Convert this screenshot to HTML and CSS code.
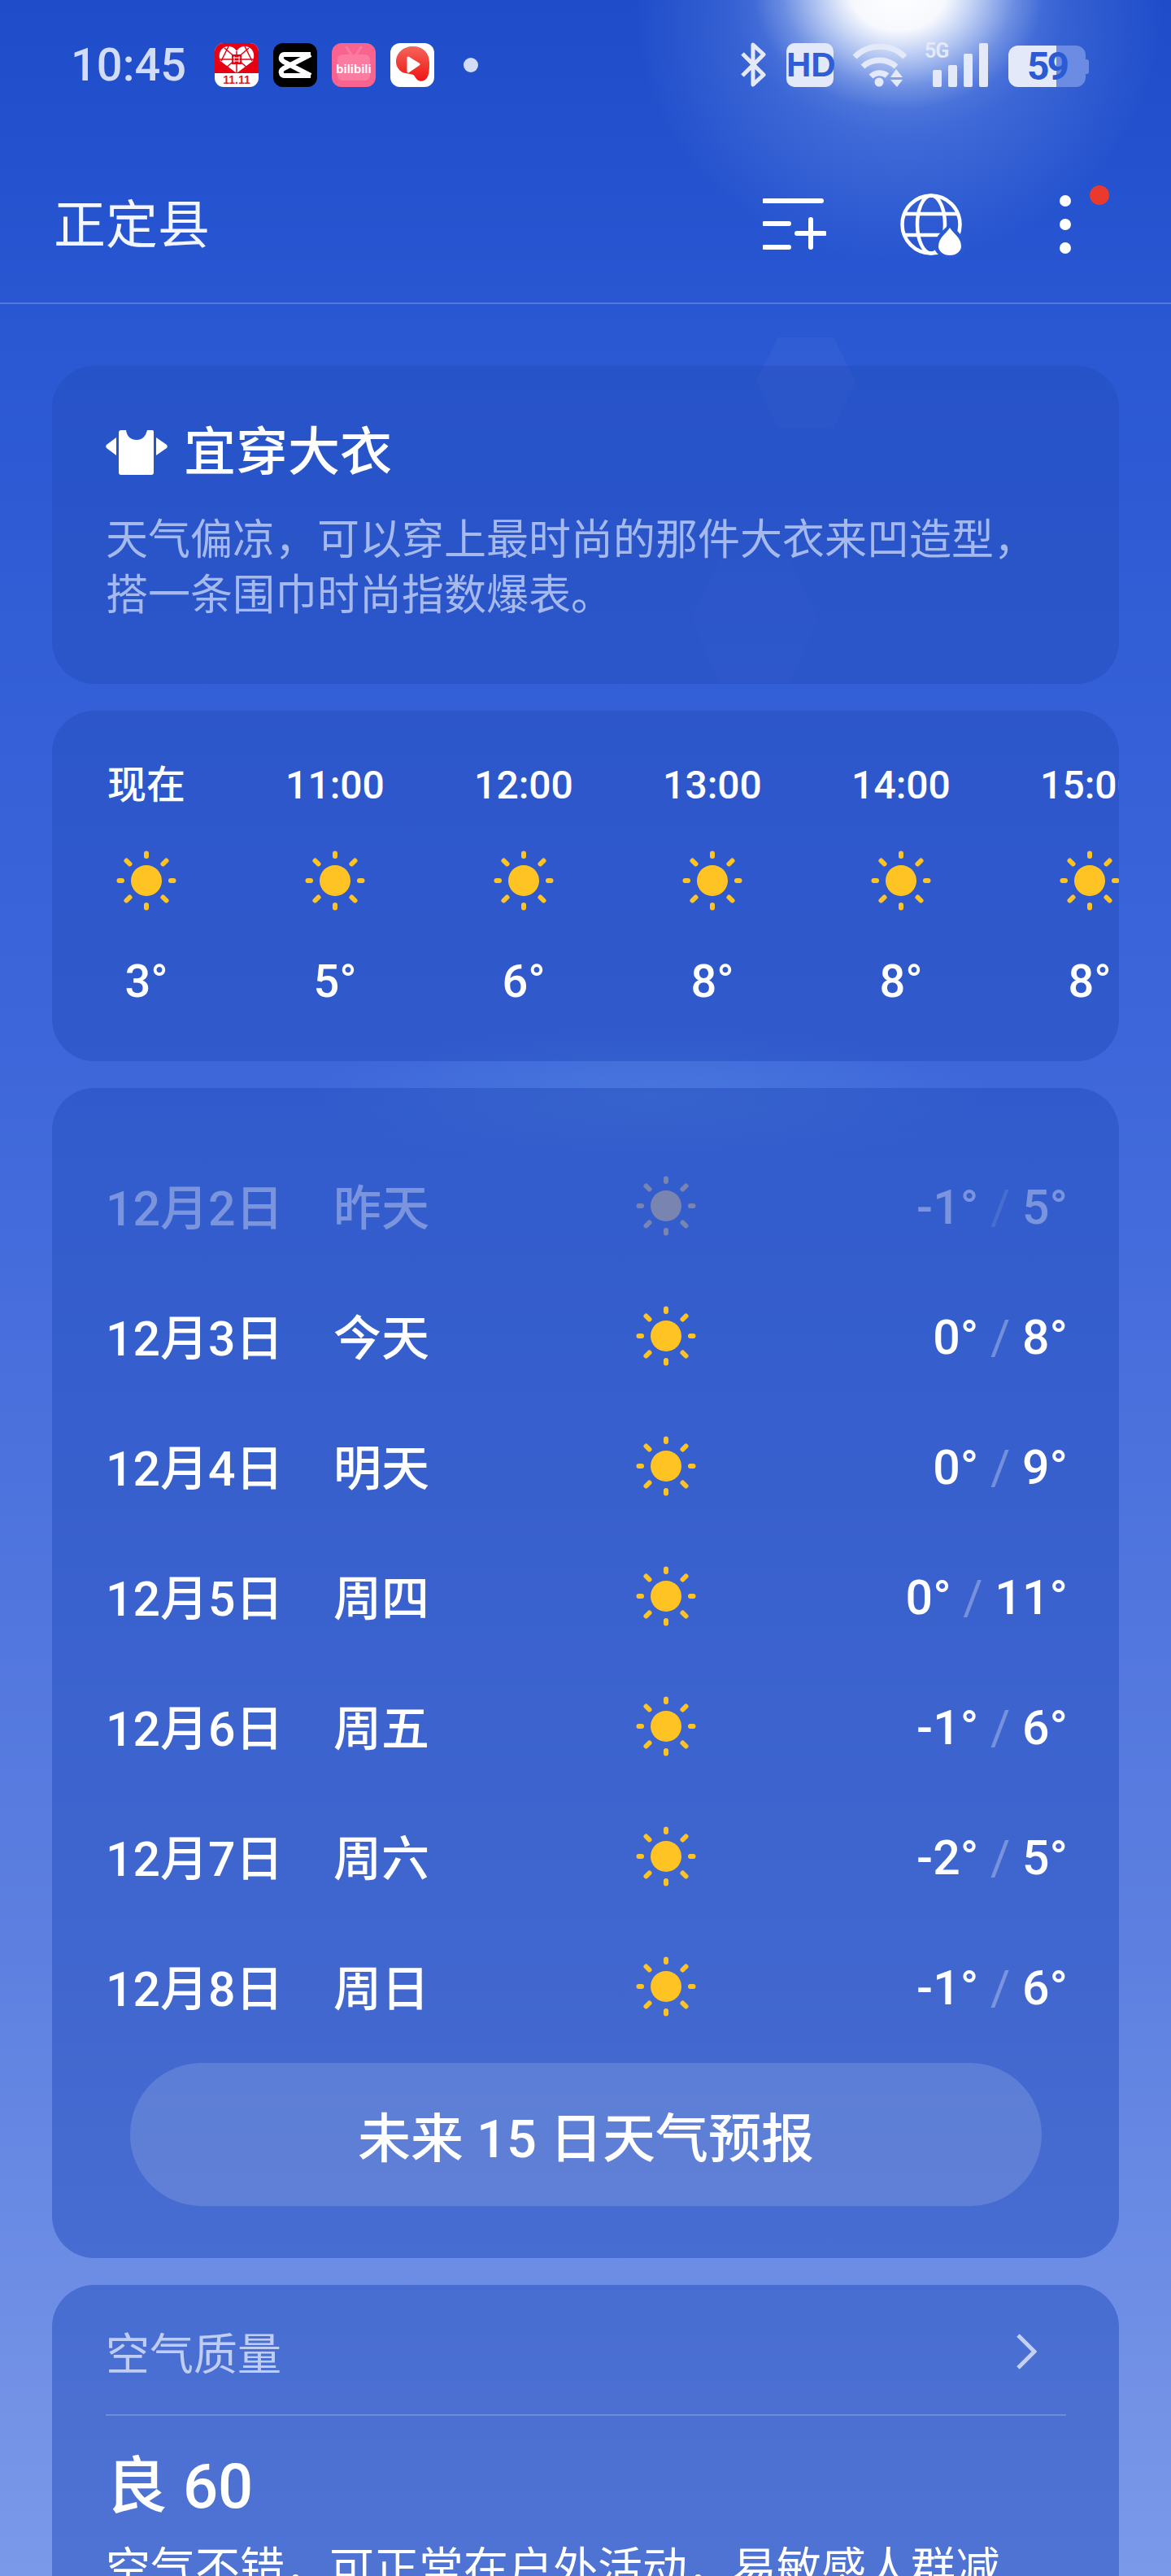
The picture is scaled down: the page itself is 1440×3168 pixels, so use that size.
FILE: index.html
```html
<!DOCTYPE html>
<html lang="zh-CN">
<head>
    <meta charset="UTF-8">
    <meta name="viewport" content="width=device-width, initial-scale=1.0">
    <title>正定县</title>
    <link rel="stylesheet" href="styles.css">
</head>
<body>
    <svg class="defs" width="0" height="0">
        <symbol id="sun" viewBox="0 0 76 76">
            <circle cx="38" cy="38" r="19"/>
            <g stroke-width="6" stroke-linecap="round">
                <path d="M38 4.500v3.500M38 68v3.500M4.500 38h3.500M68 38h3.500M13.500 13.500l4 4M58.500 58.500l4 4M13.500 62.500l4-4M58.500 17.500l4-4"/>
            </g>
        </symbol>
        <linearGradient id="redPlay" x1="0" y1="0" x2="0" y2="1">
            <stop offset="0" stop-color="#f4655a"/>
            <stop offset="1" stop-color="#ef1414"/>
        </linearGradient>
    </svg>

    <div class="flare-wide"></div>
    <div class="flare"></div>
    <div class="ghost ghost-one"></div>
    <div class="ghost ghost-two"></div>

    <div class="page">
        <!-- Status bar -->
        <div class="status-bar">
            <span class="clock">10:45</span>
            <div class="app-icons">
                <svg class="app-icon" viewBox="0 0 54 54">
                    <rect width="54" height="54" rx="11" fill="#fff"/>
                    <path d="M0 11a11 11 0 0 1 11-11h32a11 11 0 0 1 11 11v26H0z" fill="#e60012"/>
                    <path d="M27 37L7 22C3 12 9 4 17 4c4 0 8 2 10 6 2-4 6-6 10-6 8 0 14 8 10 18z" fill="#fff"/>
                    <path d="M27 10v27M6 20h42M12 6l30 26M42 6L12 32M17 4l-9 18M37 4l9 18" stroke="#e60012" stroke-width="1.5" fill="none"/>
                    <rect x="21" y="14" width="12" height="12" fill="#e60012"/>
                    <path d="M24 16v8M30 16v8M22.500 18h9M22.500 22h9" stroke="#fff" stroke-width="1"/>
                    <text x="27" y="50" class="pdd-text">11.11</text>
                </svg>
                <svg class="app-icon" viewBox="0 0 54 54">
                    <rect width="54" height="54" rx="12" fill="#000"/>
                    <path d="M46 14L13 31c-3 2-4 4-3 6 0 2 2 3 4 3h32M46 40L13 23c-3-2-4-4-3-6 0-2 2-3 4-3h32" fill="none" stroke="#fff" stroke-width="6"/>
                </svg>
                <svg class="app-icon" viewBox="0 0 54 54">
                    <rect width="54" height="54" rx="12" fill="#f8648f"/>
                    <rect x="7" y="14" width="40" height="32" rx="6" fill="#fb7ba1"/>
                    <path d="M18 5l6 9M36 5l-6 9" stroke="#fb7ba1" stroke-width="3" stroke-linecap="round"/>
                    <text x="27" y="37" class="bili-text">bilibili</text>
                </svg>
                <svg class="app-icon" viewBox="0 0 54 54">
                    <rect width="54" height="54" rx="12" fill="#fff"/>
                    <path d="M28 4c12 0 20 8 20 20 0 7 0 14-3 19-3 4-8 5-12 2-2-2-3-5-5-6-4-2-9-1-13-3-5-3-8-8-8-13C7 12 16 4 28 4z" fill="url(#redPlay)"/>
                    <path d="M22 18l13 8-13 9z" fill="#fff" stroke="#fff" stroke-width="3" stroke-linejoin="round"/>
                </svg>
                <span class="more-dot"></span>
            </div>
            <div class="sys-icons">
                <svg class="sys-bt" viewBox="0 0 33 55">
                    <path d="M3 14l26 26-13 12V3l13 12L3 41" fill="none" stroke="#e3e9f8" stroke-width="5" stroke-linejoin="round"/>
                </svg>
                <div class="sys-hd">HD</div>
                <svg class="sys-wifi" viewBox="0 0 69 56">
                    <path d="M3 19a44 44 0 0 1 62 0M13 31a30 30 0 0 1 41 0M23 43a15 15 0 0 1 20-1" fill="none" stroke="#e3e9f8" stroke-width="7"/>
                    <circle cx="33" cy="50" r="5.500" fill="#e3e9f8"/>
                    <path d="M54 34l8 10H47zM47 47h15l-7 9z" fill="#e3e9f8"/>
                </svg>
                <div class="sys-signal">
                    <span class="five-g">5G</span>
                    <span class="bar bar-1"></span>
                    <span class="bar bar-2"></span>
                    <span class="bar bar-3"></span>
                    <span class="bar bar-4"></span>
                </div>
                <div class="battery">
                    <div class="battery-body"><span class="battery-num">59</span></div>
                    <div class="battery-nub"></div>
                </div>
            </div>
        </div>

        <!-- Header -->
        <header class="top-bar">
            <h1 class="city">正定县</h1>
            <div class="top-actions">
                <svg class="action-list" viewBox="0 0 78 64">
                    <path d="M2 3h70M2 31h30M2 60h30M42 43h34M59 26v34" fill="none" stroke="#fff" stroke-width="6" stroke-linecap="round"/>
                </svg>
                <svg class="action-globe" viewBox="0 0 76 76">
                    <g fill="none" stroke="#fff" stroke-width="4.500">
                        <circle cx="38" cy="38" r="35.500"/>
                        <ellipse cx="38" cy="38" rx="17" ry="35.500"/>
                        <path d="M5 25h66M5 51h66"/>
                    </g>
                    <path d="M61 36c5 8 19 15 19 29a19 15 0 0 1-38 0c0-14 14-21 19-29z" fill="#2858d2"/>
                    <path d="M61 42c4 7 14 12 14 23a14 11 0 0 1-28 0c0-11 10-16 14-23z" fill="#fff"/>
                </svg>
                <div class="action-more">
                    <span></span><span></span><span></span>
                    <i class="red-dot"></i>
                </div>
            </div>
        </header>

        <main class="cards">
            <!-- Clothing tip -->
            <section class="card tip-card">
                <div class="tip-title">
                    <svg class="shirt" viewBox="0 0 76 56">
                        <path d="M16 3c0-2 1-3 3-3h6c1 8 6 12 13 12s11-4 13-12h6c2 0 2 1 2 3v49c0 2-1 3-3 3H19c-2 0-3-1-3-3z" fill="#fff"/>
                        <path d="M13 9L1 18c-1 1-1 3 0 4l12 9zM62 9l13 9c1 1 1 3 0 4l-13 9z" fill="#fff"/>
                    </svg>
                    <span>宜穿大衣</span>
                </div>
                <p class="tip-text">天气偏凉，可以穿上最时尚的那件大衣来凹造型，<br>搭一条围巾时尚指数爆表。</p>
            </section>

            <!-- Hourly forecast -->
            <section class="card hourly-card">
                <div class="hour"><span class="hour-label">现在</span><svg class="sun"><use href="#sun"/></svg><span class="hour-temp">3°</span></div>
                <div class="hour"><span class="hour-label">11:00</span><svg class="sun"><use href="#sun"/></svg><span class="hour-temp">5°</span></div>
                <div class="hour"><span class="hour-label">12:00</span><svg class="sun"><use href="#sun"/></svg><span class="hour-temp">6°</span></div>
                <div class="hour"><span class="hour-label">13:00</span><svg class="sun"><use href="#sun"/></svg><span class="hour-temp">8°</span></div>
                <div class="hour"><span class="hour-label">14:00</span><svg class="sun"><use href="#sun"/></svg><span class="hour-temp">8°</span></div>
                <div class="hour"><span class="hour-label">15:00</span><svg class="sun"><use href="#sun"/></svg><span class="hour-temp">8°</span></div>
            </section>

            <!-- Daily forecast -->
            <section class="card daily-card">
                <div class="day past"><span>12月2日</span><span>昨天</span><svg class="sun"><use href="#sun"/></svg><span class="range">-1° <em>/</em> 5°</span></div>
                <div class="day"><span>12月3日</span><span>今天</span><svg class="sun"><use href="#sun"/></svg><span class="range">0° <em>/</em> 8°</span></div>
                <div class="day"><span>12月4日</span><span>明天</span><svg class="sun"><use href="#sun"/></svg><span class="range">0° <em>/</em> 9°</span></div>
                <div class="day"><span>12月5日</span><span>周四</span><svg class="sun"><use href="#sun"/></svg><span class="range">0° <em>/</em> 11°</span></div>
                <div class="day"><span>12月6日</span><span>周五</span><svg class="sun"><use href="#sun"/></svg><span class="range">-1° <em>/</em> 6°</span></div>
                <div class="day"><span>12月7日</span><span>周六</span><svg class="sun"><use href="#sun"/></svg><span class="range">-2° <em>/</em> 5°</span></div>
                <div class="day"><span>12月8日</span><span>周日</span><svg class="sun"><use href="#sun"/></svg><span class="range">-1° <em>/</em> 6°</span></div>
                <button class="more-btn" type="button">未来 15 日天气预报</button>
            </section>

            <!-- Air quality -->
            <section class="card air-card">
                <div class="air-head">
                    <span>空气质量</span>
                    <svg class="chevron" viewBox="0 0 26 44">
                        <path d="M3 2l20 20L3 42" fill="none" stroke="#c3d0f3" stroke-width="5"/>
                    </svg>
                </div>
                <div class="air-value">良 60</div>
                <p class="air-text">空气不错，可正常在户外活动，易敏感人群减</p>
            </section>
        </main>
    </div>
</body>
</html>
```

FILE: styles.css
```css
* {
    box-sizing: border-box;
}

html,
body {
    margin: 0;
    height: 3168px;
    overflow: hidden;
}

body {
    position: relative;
    font-family: Roboto, "Noto Sans CJK SC", sans-serif;
    color: #ffffff;
    background:
        radial-gradient(ellipse 420px 90px at 800px 1350px, rgba(90, 150, 225, 0.35), rgba(90, 150, 225, 0) 100%),
        linear-gradient(180deg, #1f4dca 0%, #2a58d3 13%, #3d66da 40%, #5c7fe0 75%, #7b99e9 100%);
}

.defs {
    position: absolute;
}

/* sun glare and lens ghosts, they sit behind everything */
.flare {
    position: absolute;
    left: 895px;
    top: -180px;
    width: 420px;
    height: 340px;
    background: radial-gradient(closest-side, #ffffff 0%, rgba(255, 255, 255, 0.95) 28%, rgba(222, 232, 252, 0.7) 48%, rgba(170, 192, 242, 0.4) 68%, rgba(110, 145, 232, 0.12) 85%, rgba(80, 120, 225, 0) 100%);
}

.flare-wide {
    position: absolute;
    left: 780px;
    top: -300px;
    width: 650px;
    height: 620px;
    background: radial-gradient(closest-side, rgba(150, 180, 240, 0.55) 0%, rgba(120, 155, 235, 0.3) 55%, rgba(80, 120, 225, 0) 100%);
}

.ghost {
    position: absolute;
    background: rgba(255, 255, 255, 0.035);
    clip-path: polygon(22% 0, 78% 0, 100% 48%, 78% 100%, 22% 100%, 0 48%);
}

.ghost-one {
    left: 930px;
    top: 415px;
    width: 122px;
    height: 112px;
}

.ghost-two {
    left: 850px;
    top: 690px;
    width: 156px;
    height: 150px;
    opacity: 0.4;
}

.page {
    position: relative;
}

/* status bar */
.status-bar {
    height: 160px;
    padding: 51px 0 0 87px;
    display: flex;
    align-items: flex-start;
}

.clock {
    width: 177px;
    font-size: 56px;
    line-height: 58px;
    font-weight: 500;
    color: #d3dcf6;
}

.app-icons {
    display: flex;
    align-items: center;
    gap: 18px;
    margin-top: 2px;
}

.app-icon {
    width: 54px;
    height: 54px;
}

.pdd-text {
    font-family: "Liberation Sans Narrow", "Liberation Sans", sans-serif;
    font-size: 14px;
    font-weight: 700;
    fill: #d81e2a;
    text-anchor: middle;
}

.bili-text {
    font-family: "Liberation Sans Narrow", "Liberation Sans", sans-serif;
    font-size: 15px;
    font-weight: 700;
    fill: #ffffff;
    text-anchor: middle;
}

.more-dot {
    width: 18px;
    height: 18px;
    margin-left: 18px;
    border-radius: 50%;
    background-color: #d3dcf6;
}

.sys-icons {
    display: flex;
    margin-left: 322px;
}

.sys-bt {
    width: 33px;
    height: 55px;
    margin-top: 1px;
}

.sys-hd {
    width: 58px;
    height: 54px;
    margin: 2px 0 0 24px;
    border-radius: 10px;
    background-color: #e3e9f8;
    color: #2f5ed6;
    font-family: "Liberation Sans Narrow", "Liberation Sans", sans-serif;
    font-size: 42px;
    font-weight: 700;
    line-height: 54px;
    text-align: center;
}

.sys-wifi {
    width: 69px;
    height: 56px;
    margin-left: 23px;
}

.sys-signal {
    position: relative;
    width: 78px;
    height: 56px;
    margin-left: 20px;
    display: flex;
    align-items: flex-end;
    justify-content: flex-end;
    gap: 8px;
}

.five-g {
    position: absolute;
    left: 0;
    top: -2px;
    font-size: 25px;
    line-height: 28px;
    font-weight: 700;
    color: #e3e9f8;
    letter-spacing: -1px;
}

.bar {
    width: 11px;
    border-radius: 2px;
    background-color: #e3e9f8;
}

.bar-1 { height: 21px; }
.bar-2 { height: 27px; }
.bar-3 { height: 41px; }
.bar-4 { height: 54px; }

.battery {
    display: flex;
    align-items: center;
    margin: 5px 0 0 25px;
}

.battery-body {
    width: 95px;
    height: 51px;
    border-radius: 12px;
    background: linear-gradient(90deg, #e3e9f8 0, #e3e9f8 59px, #6b8ce2 59px);
    text-align: center;
}

.battery-num {
    color: #2c5ad2;
    font-size: 48px;
    line-height: 51px;
    font-weight: 700;
    letter-spacing: -3px;
}

.battery-nub {
    width: 4px;
    height: 18px;
    border-radius: 0 3px 3px 0;
    background-color: #6b8ce2;
}

/* header */
.top-bar {
    height: 214px;
    padding: 78px 0 0 66px;
    border-bottom: 2px solid rgba(255, 255, 255, 0.2);
    display: flex;
    align-items: flex-start;
    justify-content: space-between;
}

.city {
    margin: 0;
    font-size: 64px;
    line-height: 80px;
    font-weight: 400;
    color: #f4f6fd;
}

.top-actions {
    display: flex;
    align-items: flex-start;
}

.action-list {
    width: 78px;
    height: 64px;
    margin-top: 6px;
}

.action-globe {
    width: 76px;
    height: 76px;
    margin-left: 91px;
    overflow: visible;
}

.action-more {
    position: relative;
    width: 14px;
    margin: 2px 123px 0 120px;
    display: flex;
    flex-direction: column;
    gap: 15px;
}

.action-more span {
    width: 14px;
    height: 14px;
    border-radius: 50%;
    background-color: #ffffff;
}

.red-dot {
    position: absolute;
    left: 37px;
    top: -12px;
    width: 24px;
    height: 24px;
    border-radius: 50%;
    background-color: #ea3a2e;
}

/* cards */
.cards {
    padding: 76px 64px 0;
    display: flex;
    flex-direction: column;
    gap: 33px;
}

.card {
    border-radius: 52px;
    background-color: rgba(36, 78, 190, 0.5);
    flex-shrink: 0;
}

.tip-card {
    height: 391px;
    padding: 71px 66px 0;
}

.tip-title {
    display: flex;
    align-items: center;
    gap: 20px;
    font-size: 64px;
    line-height: 72px;
    font-weight: 500;
}

.shirt {
    width: 76px;
    height: 56px;
}

.tip-text {
    margin: 38px 0 0 0;
    font-size: 52px;
    line-height: 68px;
    color: #a5b9ec;
}

.hourly-card {
    height: 431px;
    padding-top: 62px;
    display: flex;
    overflow: hidden;
}

.hour {
    width: 232px;
    flex-shrink: 0;
    display: flex;
    flex-direction: column;
    align-items: center;
}

.hour-label {
    font-size: 48px;
    line-height: 60px;
    font-weight: 500;
}

.hour-temp {
    margin-top: 51px;
    font-size: 56px;
    line-height: 70px;
    font-weight: 500;
}

.sun {
    width: 76px;
    height: 76px;
    fill: #ffc423;
    stroke: #ffc423;
    stroke-width: 0;
}

.hour .sun {
    margin-top: 49px;
}

.daily-card {
    height: 1439px;
    padding: 65px 63px 0 66px;
}

.day {
    height: 160px;
    display: grid;
    grid-template-columns: 280px 371px 76px 1fr;
    align-items: center;
    font-size: 59px;
    font-weight: 500;
}

.day span {
    margin-top: -4px;
}

.day.past {
    opacity: 0.35;
}

.day.past .sun {
    fill: #ffd080;
    stroke: #ffd080;
}

.range {
    padding-top: 6px;
    text-align: right;
}

.range em {
    font-style: normal;
    font-weight: 400;
    opacity: 0.3;
}

.more-btn {
    display: block;
    width: 1121px;
    height: 176px;
    margin: 14px 0 0 30px;
    border: none;
    border-radius: 88px;
    background-color: rgba(255, 255, 255, 0.14);
    color: #ffffff;
    font-family: inherit;
    font-size: 65px;
    font-weight: 500;
}

.air-card {
    height: 500px;
    padding: 0 65px 0 66px;
}

.air-head {
    height: 161px;
    padding: 4px 36px 0 0;
    border-bottom: 2px solid rgba(255, 255, 255, 0.2);
    display: flex;
    align-items: center;
    justify-content: space-between;
    font-size: 54px;
    color: #c0cdf2;
}

.chevron {
    width: 26px;
    height: 44px;
}

.air-value {
    margin-top: 42px;
    font-size: 76px;
    line-height: 90px;
    font-weight: 500;
}

.air-text {
    margin: 20px 0 0 0;
    font-size: 55px;
    line-height: 72px;
    white-space: nowrap;
}
```
